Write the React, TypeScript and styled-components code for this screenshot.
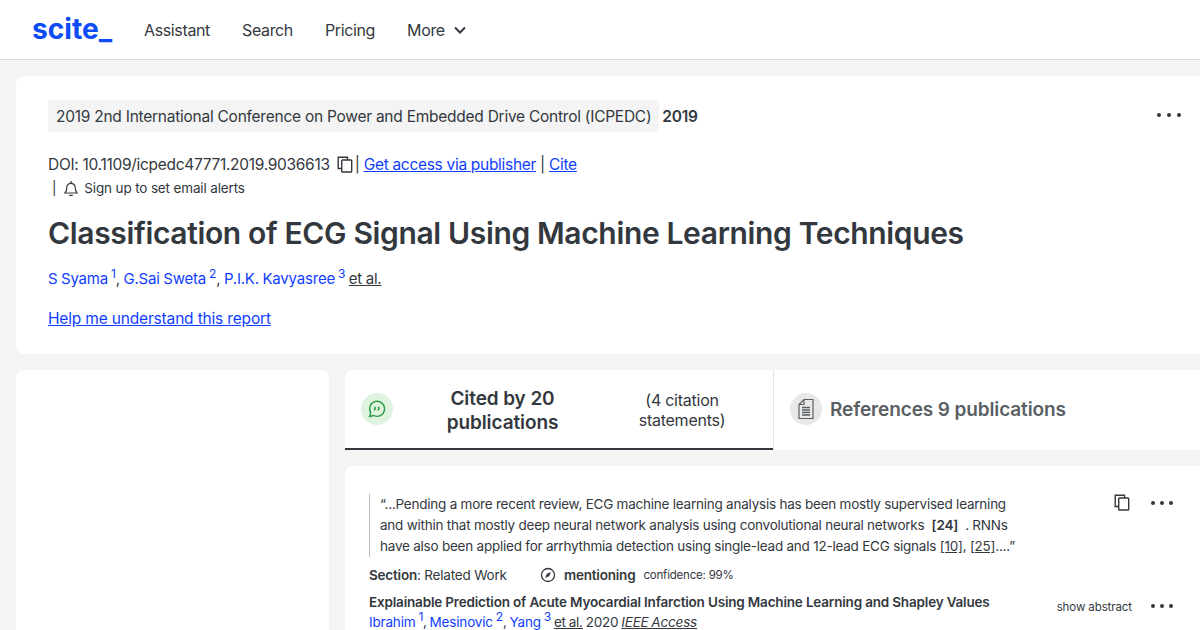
import styled, { createGlobalStyle } from 'styled-components';

const GlobalStyle = createGlobalStyle`
  html, body {
    margin: 0;
    height: 630px;
    overflow: hidden;
    background: #f4f4f4;
    color: #33383e;
    font-family: Inter, "Liberation Sans", sans-serif;
  }
  * { box-sizing: border-box; }
`;

const BLUE = '#0f3eff';

const Nav = styled.header`
  display: flex;
  align-items: center;
  height: 60px;
  padding: 0 32px;
  background: #fff;
  border-bottom: 1px solid #d9d9d9;
`;
const Logo = styled.div`
  flex: 0 0 112px;
  margin-top: -2px;
  font-size: 28.2px;
  font-weight: 700;
  color: #0b4cf5;
`;
const NavLinks = styled.nav`
  display: flex;
  align-items: center;
  gap: 32px;
  font-size: 16px;
  letter-spacing: -0.36px;
  color: #33383e;
`;
const NavItem = styled.span`
  display: flex;
  align-items: center;
  gap: 9px;
`;
const Page = styled.main`
  display: flex;
  flex-direction: column;
  gap: 16px;
  padding: 16px 0 0 16px;
  margin-right: -8px;
`;
const HeaderCard = styled.section`
  position: relative;
  height: 278px;
  padding: 24px 32px;
  background: #fff;
  border-radius: 8px;
`;
const VenueRow = styled.div`
  display: flex;
  align-items: center;
  gap: 3px;
  font-size: 15.5px;
  letter-spacing: -0.25px;
`;
const Venue = styled.span`
  height: 32px;
  padding: 0 8px;
  display: flex;
  align-items: center;
  background: #f4f4f4;
  border-radius: 4px;
`;
const Year = styled.b`
  font-weight: 600;
`;
const DoiRow = styled.div`
  display: flex;
  align-items: center;
  margin-top: 20px;
  height: 24px;
  font-size: 15.5px;
  letter-spacing: -0.3px;
`;
const IconGap = styled.span`
  display: flex;
  margin-left: 6px;
  margin-right: 1px;
`;
const Alerts = styled.div`
  display: flex;
  align-items: center;
  height: 24px;
  font-size: 13.5px;
  letter-spacing: -0.15px;
  color: #33383e;
  & > svg {
    margin-right: 5px;
  }
`;
const Bar = styled.span`
  margin: 0 7px 0 4px;
`;
const Title = styled.h1`
  margin: 13px 0 0;
  font-size: 30px;
  line-height: 40px;
  font-weight: 600;
  letter-spacing: -0.35px;
`;
const Authors = styled.div`
  margin-top: 14px;
  font-size: 15px;
  line-height: 24px;
  letter-spacing: -0.2px;
  word-spacing: -0.4px;
`;
const A = styled.a<{ $u?: boolean }>`
  color: ${BLUE};
  text-decoration: ${(p) => (p.$u ? 'underline' : 'none')};
`;
const Plain = styled.span`
  text-decoration: underline;
`;
const Sup = styled.sup`
  font-size: 12px;
  line-height: 0;
  vertical-align: 6px;
  margin: 0 0 0 3px;
`;
const Help = styled.div`
  margin-top: 16px;
  font-size: 15.5px;
  letter-spacing: -0.17px;
  line-height: 24px;
`;
const Dots = styled.span<{ $right: number; $top: number; $gap: number }>`
  position: absolute;
  right: ${(p) => p.$right}px;
  top: ${(p) => p.$top}px;
  display: flex;
  gap: ${(p) => p.$gap}px;
  & > i {
    width: 4px;
    height: 4px;
    border-radius: 50%;
    background: #33383e;
  }
`;
const Columns = styled.div`
  display: flex;
  gap: 16px;
`;
const Side = styled.aside`
  flex: 0 0 313px;
  height: 300px;
  background: #fff;
  border-radius: 8px;
`;
const MainCol = styled.div`
  flex: 1;
  display: flex;
  flex-direction: column;
  gap: 16px;
`;
const Tabs = styled.div`
  display: flex;
  height: 80px;
`;
const CitedTab = styled.div`
  flex: 0 0 428px;
  display: flex;
  align-items: center;
  padding: 0 16px;
  background: #fff;
  border-bottom: 2px solid #33383e;
  border-radius: 8px 0 0 0;
`;
const RefTab = styled.div`
  flex: 1;
  display: flex;
  align-items: center;
  gap: 8px;
  padding: 0 16px 2px;
  background: #fff;
  border-left: 1px solid #e3e3e3;
  font-size: 19px;
  letter-spacing: -0.12px;
  font-weight: 600;
  color: #5a5f64;
`;
const Round = styled.span<{ $bg: string }>`
  flex: none;
  display: flex;
  align-items: center;
  justify-content: center;
  width: 32px;
  height: 32px;
  border-radius: 50%;
  background: ${(p) => p.$bg};
`;
const CitedLabel = styled.div`
  width: 219px;
  padding-top: 3px;
  text-align: center;
  font-size: 19px;
  letter-spacing: -0.1px;
  line-height: 24px;
  font-weight: 600;
`;
const CitedCount = styled.div`
  width: 140px;
  padding-top: 2px;
  text-align: center;
  font-size: 16px;
  letter-spacing: -0.25px;
  line-height: 20px;
`;
const Statement = styled.article`
  position: relative;
  height: 200px;
  padding: 28px 24px;
  background: #fff;
  border-radius: 8px;
`;
const Quote = styled.blockquote`
  margin: 0;
  width: 651px;
  padding-left: 10px;
  border-left: 1px solid #bdbdbd;
  font-size: 13.5px;
  line-height: 21px;
  letter-spacing: -0.23px;
`;
const QuoteRef = styled.b`
  font-weight: 600;
  margin: 0 4px;
`;
const Under = styled.span`
  text-decoration: underline;
`;
const Meta = styled.div`
  display: flex;
  align-items: center;
  margin-top: 8px;
  height: 20px;
  font-size: 13.5px;
  letter-spacing: -0.2px;
`;
const Section = styled.span`
  width: 171px;
  & > b {
    font-weight: 600;
  }
`;
const Tally = styled.b`
  margin: 0 8px;
  font-weight: 600;
`;
const Conf = styled.span`
  font-size: 11.5px;
  letter-spacing: -0.2px;
`;
const PaperTitle = styled.div`
  margin-top: 7px;
  font-size: 13.5px;
  line-height: 20px;
  font-weight: 600;
  letter-spacing: -0.18px;
`;
const PaperAuthors = styled.div`
  font-size: 13.5px;
  letter-spacing: -0.18px;
  word-spacing: -0.8px;
  line-height: 20px;
`;
const Journal = styled.i`
  text-decoration: underline;
`;
const ShowAbstract = styled.span`
  position: absolute;
  right: 76px;
  top: 134px;
  font-size: 11.5px;
  letter-spacing: -0.1px;
  color: #33383e;
`;
const CopyBtn = styled.span`
  position: absolute;
  right: 77px;
  top: 27px;
  display: flex;
`;

const CopyIcon = () => (
  <svg width="18" height="18" viewBox="0 0 18 18" fill="none" stroke="#33383e" strokeWidth="1.4">
    <rect x="5.7" y="5" width="10" height="12" rx="0.8" />
    <path d="M5.5 13.5H2.2V2.2H11.5V5" />
  </svg>
);

const ThreeDots = ({ right, top, gap }: { right: number; top: number; gap: number }) => (
  <Dots $right={right} $top={top} $gap={gap}>
    <i />
    <i />
    <i />
  </Dots>
);

export default function App() {
  return (
    <>
      <GlobalStyle />
      <Nav>
        <Logo>scite_</Logo>
        <NavLinks>
          <span>Assistant</span>
          <span>Search</span>
          <span>Pricing</span>
          <NavItem>
            More
            <svg width="12" height="8" viewBox="0 0 12 8" fill="none" stroke="#33383e" strokeWidth="2">
              <path d="M1 1.5l5 5 5-5" />
            </svg>
          </NavItem>
        </NavLinks>
      </Nav>
      <Page>
        <HeaderCard>
          <ThreeDots right={27} top={37} gap={6} />
          <VenueRow>
            <Venue>2019 2nd International Conference on Power and Embedded Drive Control (ICPEDC)</Venue>
            <Year>2019</Year>
          </VenueRow>
          <DoiRow>
            DOI: 10.1109/icpedc47771.2019.9036613
            <IconGap>
              <CopyIcon />
            </IconGap>
            |&nbsp;<A href="#" $u>Get access via publisher</A>&nbsp;|&nbsp;<A href="#" $u>Cite</A>
          </DoiRow>
          <Alerts>
            <Bar>|</Bar>
            <svg width="16" height="17" viewBox="0 0 16 17" fill="none" stroke="#33383e" strokeWidth="1.2">
              <path d="M2 13c1.300-1.300 1.800-2.500 1.800-5.500a4.200 4.200 0 0 1 8.400 0c0 3 .5 4.200 1.800 5.500z" />
              <path d="M6.200 15.300h3.600M8 1v2" />
            </svg>
            Sign up to set email alerts
          </Alerts>
          <Title>Classification of ECG Signal Using Machine Learning Techniques</Title>
          <Authors>
            <A href="#">S Syama<Sup>1</Sup></A>, <A href="#">G.Sai Sweta<Sup>2</Sup></A>, <A href="#">P.I.K. Kavyasree<Sup>3</Sup></A>{' '}
            <Plain>et al.</Plain>
          </Authors>
          <Help>
            <A href="#" $u>Help me understand this report</A>
          </Help>
        </HeaderCard>
        <Columns>
          <Side />
          <MainCol>
            <Tabs>
              <CitedTab>
                <Round $bg="#dff3df">
                  <svg width="20" height="20" viewBox="0 0 20 20" fill="none" stroke="#2d9a46" strokeWidth="1.3">
                    <path d="M2.500 17.500l1.300-3.700A7.500 7.500 0 1 1 6.800 16.500z" />
                    <path d="M8 7.800v2l-.7 1.500M11.800 7.800v2l-.7 1.500" strokeWidth="1.600" />
                  </svg>
                </Round>
                <CitedLabel>Cited by 20 publications</CitedLabel>
                <CitedCount>(4 citation statements)</CitedCount>
              </CitedTab>
              <RefTab>
                <Round $bg="#e8e8e8">
                  <svg width="18" height="22" viewBox="0 0 18 22" fill="none" stroke="#5a5f64" strokeWidth="1.2">
                    <path d="M7 1.500h9v19H2V6.500z" />
                    <path d="M7 1.500v5H2" />
                    <path d="M5 9.500h8M5 12h8M5 14.500h8M5 17h8" strokeWidth="1.300" />
                  </svg>
                </Round>
                References 9 publications
              </RefTab>
            </Tabs>
            <Statement>
              <CopyBtn>
                <CopyIcon />
              </CopyBtn>
              <ThreeDots right={35} top={35} gap={5} />
              <Quote>
                “...Pending a more recent review, ECG machine learning analysis has been mostly supervised learning
                and within that mostly deep neural network analysis using convolutional neural networks
                <QuoteRef> [24] </QuoteRef>. RNNs have also been applied for arrhythmia detection using single-lead and
                12-lead ECG signals <Under>[10]</Under>, <Under>[25]</Under>....”
              </Quote>
              <Meta>
                <Section>
                  <b>Section</b>: Related Work
                </Section>
                <svg width="16" height="16" viewBox="0 0 16 16" fill="none" stroke="#33383e" strokeWidth="1.3">
                  <circle cx="8" cy="8" r="6.500" />
                  <path d="M5.500 10.500L7 7l3.500-1.500L9 9z" fill="#33383e" strokeWidth="0.5" />
                </svg>
                <Tally>mentioning</Tally>
                <Conf>confidence: 99%</Conf>
              </Meta>
              <PaperTitle>Explainable Prediction of Acute Myocardial Infarction Using Machine Learning and Shapley Values</PaperTitle>
              <PaperAuthors>
                <A href="#">Ibrahim<Sup>1</Sup></A>, <A href="#">Mesinovic<Sup>2</Sup></A>, <A href="#">Yang<Sup>3</Sup></A>{' '}
                <Plain>et al.</Plain> 2020 <Journal>IEEE Access</Journal>
              </PaperAuthors>
              <ShowAbstract>show abstract</ShowAbstract>
              <ThreeDots right={35} top={138} gap={5} />
            </Statement>
          </MainCol>
        </Columns>
      </Page>
    </>
  );
}
